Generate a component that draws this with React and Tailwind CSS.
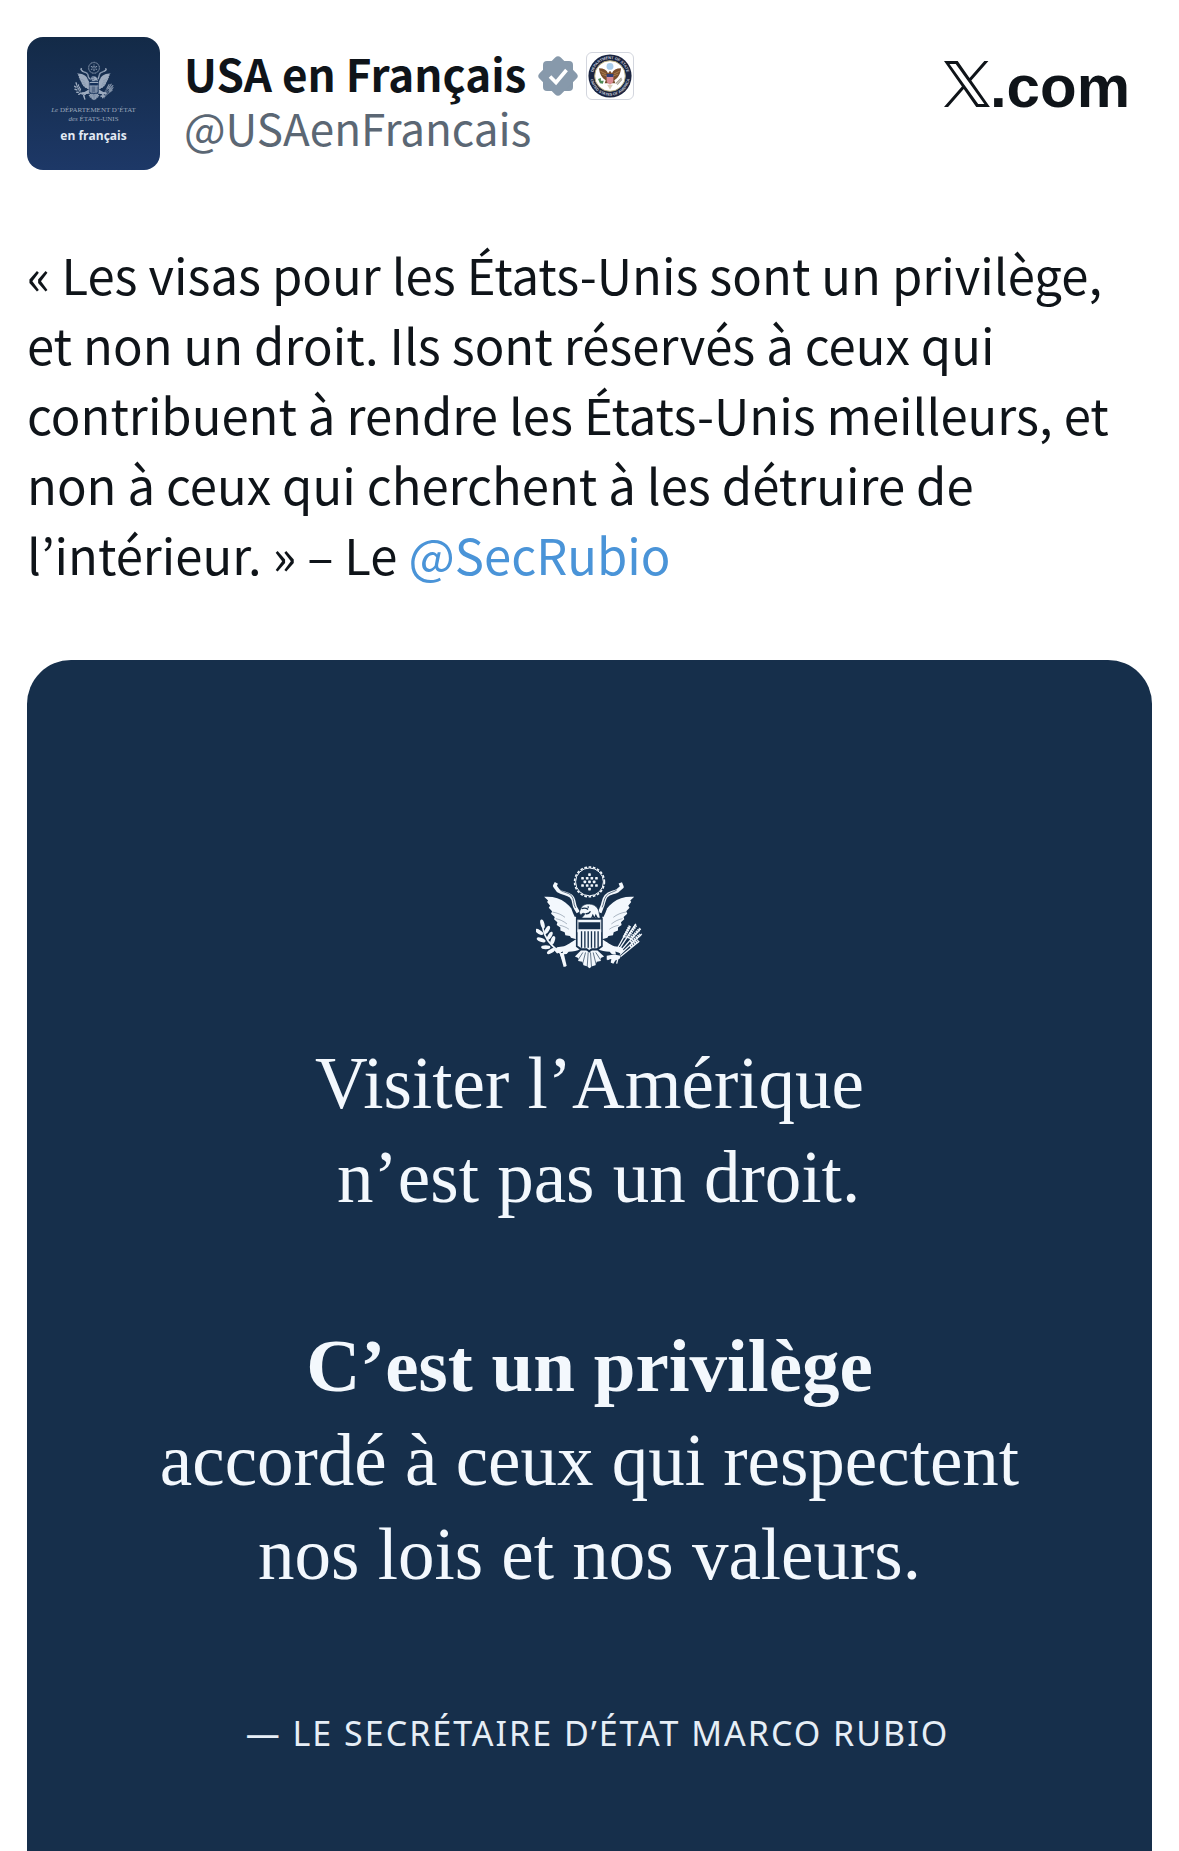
import React from "react";

const DOTS = [
  [208, 73],
  [187, 84], [201, 84], [215, 84], [229, 84],
  [194, 95], [208, 95], [222, 95],
  [187, 106], [201, 106], [215, 106], [229, 106],
  [208, 117],
];

const LEAVES = [
  [66, 222, 75], [56, 246, 30], [80, 240, 120], [62, 270, 20], [88, 258, 120],
  [76, 292, 0], [97, 272, 110], [92, 304, -30],
];

const STRIPES = [182, 192, 202, 212, 222, 232];

const Wing = () => (
  <path d="M71 140c26-2 48 4 64 17 16 12 28 29 34 49l-1 62-16-4-3-6-14-2-2-9-13-5 0-9-11-8 2-8-10-9 2-7-11-10 3-7-10-11 4-6-9-11 3-5z" />
);

const Eagle = ({ className, color, ground }) => (
  <svg viewBox="47 44 322 314" className={className} fill={color} aria-hidden="true">
    {/* glory */}
    <circle cx="208" cy="95" r="42" fill="none" stroke={color} strokeWidth="3" />
    <circle cx="208" cy="95" r="45" fill="none" stroke={color} strokeWidth="5" strokeDasharray="8 5" />
    {DOTS.map(([x, y]) => <rect key={`${x}-${y}`} x={x - 4} y={y - 4} width="8" height="8" rx="2" />)}

    {/* ribbon */}
    <g fill="none" stroke={color} strokeLinejoin="round">
      <path strokeWidth="11" d="M108 98l-5 9 11 15c14 9 26 6 38 16 12 10 7 26 14 36l8 13" />
      <path strokeWidth="11" d="M301 98l5 12-14 12c-14 7-24 5-34 16-9 10-7 24-13 34l-6 16" />
    </g>
    <path fill="none" stroke={ground} strokeWidth="2" d="M120 120c12 8 24 7 33 16 10 11 5 25 13 38M290 120c-12 7-22 7-31 17-9 12-7 23-13 35" />

    {/* wings */}
    <Wing />
    <g transform="matrix(-1 0 0 1 414 0)"><Wing /></g>
    <path
      fill="none"
      stroke={ground}
      strokeWidth="1"
      d="M96 186c14 2 28 8 38 16M106 206c12 2 24 8 34 16M118 226c10 2 20 6 28 12M318 186c-14 2-28 8-38 16M308 206c-12 2-24 8-34 16M296 226c-10 2-20 6-28 12"
    />
    <path fill="none" stroke={ground} strokeWidth="5" d="M156 176c3 9 6 16 10 24M258 176c-3 9-6 16-10 24" />

    {/* head */}
    <path stroke={ground} strokeWidth="2" d="M181 178c3-12 14-17 27-16 16 1 27 11 29 27l5 21h-62c4-8 12-12 14-19-7-3-11 0-11 5-6-4-7-12-2-18z" />
    <path fill="none" stroke={ground} strokeWidth="4" d="M184 176c7-3 14-2 20 2M196 191c6 1 12-2 15-7M214 206l4-10 5 10 4-10 5 10" />
    <circle cx="204" cy="171" r="2.5" fill={ground} />

    {/* legs */}
    <path d="M174 266c-14 4-28 19-43 23l-21 3-8 10 8 9 18-6-2 9 13-1 6-7c14-1 26-2 36-9zM240 266c14 4 28 19 43 23l21 3 8 10-8 9-18-6 2 9-13-1-6-7c-14-1-26-2-36-9z" />

    {/* tail */}
    <path d="M182 302h50l20 18-10 5 0 9-12 2-4 11-10 3-8 6-8-6-10-3-4-11-12-2 0-9-10-5z" />
    <path fill="none" stroke={ground} strokeWidth="2" d="M188 308l-14 22M196 308l-9 36M204 308l-3 44M211 308l3 44M219 308l9 36M227 308l14 22" />

    {/* shield */}
    <path fill={ground} d="M167 203h81v88l-14 10h-18l-9 8-9-8h-18l-13-10z" />
    <path d="M174 209h67v8h-67zM172 238h71v50l-13 7h-16l-7 6-7-6h-16l-12-7z" />
    <path fill="none" stroke={color} strokeWidth="3" d="M173 209v38M242 209v38" />
    {STRIPES.map((x) => <rect key={x} x={x} y="244" width="4" height="50" fill={ground} />)}

    {/* olive branch */}
    <path fill="none" stroke={color} strokeWidth="5" d="M66 216c0 26 8 50 28 70l26 24 16 40" />
    {LEAVES.map(([x, y, a]) => (
      <ellipse key={`${x}-${y}`} cx={x} cy={y} rx="14" ry="6" transform={`rotate(${a} ${x} ${y})`} />
    ))}
    <path d="M118 310l12 0 9 38-9 4z" />

    {/* arrows */}
    <path
      fill="none"
      stroke={color}
      strokeWidth="4"
      d="M290 300l40-72M294 304l54-82M298 308l64-72M300 314l66-62M302 320l56-46M284 318l-22 12M288 322l-14 16M294 326l-4 16"
    />
    <path fill="none" stroke={color} strokeWidth="9" strokeDasharray="5 2" d="M312 262l18-34M322 264l26-38M330 268l31-32M332 278l30-24M330 290l26-18" />
    <path d="M260 318l22-4 20 4-2 8-14 6-6 10-8-4 2-10-14 2z" />
  </svg>
);

const VerifiedBadge = () => (
  <svg viewBox="0 0 40 40" className="size-10 shrink-0" role="img" aria-label="Compte certifié">
    <g fill="#8799ab">
      <rect x="5" y="5" width="30" height="30" rx="4" />
      <rect x="5" y="5" width="30" height="30" rx="4" transform="rotate(45 20 20)" />
    </g>
    <path d="M12 20.500l6 6L28.500 14" fill="none" stroke="#fff" strokeWidth="3.600" />
  </svg>
);

const StateSeal = () => (
  <svg viewBox="0 0 48 48" className="size-12 shrink-0 rounded-md border border-[#d3d6de]" role="img" aria-label="Department of State">
    <circle cx="24" cy="24" r="22.500" fill="#1a2440" />
    <circle cx="24" cy="24" r="16" fill="#fff" stroke="#b5a878" />
    <defs>
      <path id="seal-top" d="M6.200 24a17.800 17.800 0 0 1 35.600 0" />
      <path id="seal-bottom" d="M3.400 24a20.600 20.600 0 0 0 41.200 0" />
    </defs>
    <g fill="#c9cedb" fontFamily="Liberation Sans" fontSize="4" fontWeight="700" textAnchor="middle">
      <text><textPath href="#seal-top" startOffset="50%">DEPARTMENT OF STATE</textPath></text>
      <text><textPath href="#seal-bottom" startOffset="50%">UNITED STATES OF AMERICA</textPath></text>
    </g>
    <circle cx="24" cy="14" r="3.600" fill="#a9cdec" />
    <path d="M12.500 16c5 0 8 2 9.500 5l2-2.500 2 2.500c1.500-3 4.500-5 9.500-5-.5 6-3 10-7 12.500l1 3h-11l1-3c-4-2.500-6.500-6.500-7-12.500z" fill="#7a4f2e" />
    <path d="M14 19l6 3M15.500 22l5 2M34 19l-6 3M32.500 22l-5 2" stroke="#b98a55" strokeWidth=".8" />
    <path d="M20.500 23h7v6c0 2-2 3-3.500 4-1.500-1-3.500-2-3.500-4z" fill="#d98b93" />
    <path d="M20.500 22h7v3h-7z" fill="#2f3f78" />
    <path d="M11.500 27l3-1 0 3 3 0-1 3-3-.5z" fill="#4c8a55" />
    <path d="M30 32l6-6M31.500 33l5-5.500" stroke="#a39c8c" strokeWidth="1.200" />
    <path d="M21 33h6l-3 5z" fill="#d8cdb6" />
  </svg>
);

const XLogo = () => (
  <svg viewBox="0 0 24 24" className="size-[46px]" fill="currentColor" aria-hidden="true">
    <path d="M14.258 10.152 23.176 0h-2.113l-7.747 8.813L7.133 0H0l9.352 13.328L0 23.973h2.113l8.176-9.309 6.531 9.309h7.133zm-2.896 3.293-.949-1.328L2.875 1.560h3.246l6.086 8.523.945 1.328 7.910 11.078h-3.246z" />
  </svg>
);

const Avatar = () => (
  <div className="flex size-[133px] shrink-0 flex-col items-center rounded-2xl bg-linear-to-b from-[#132a47] to-[#1d3867] pt-6">
    <Eagle className="size-10" color="#9dabbf" ground="#15305a" />
    <p className="mt-[5px] text-center font-['Liberation_Serif',serif] text-[7px] leading-[9px] whitespace-nowrap text-[#9aa7bb]">
      <i>Le</i> DÉPARTEMENT D’ÉTAT<br />
      <i>des</i> ÉTATS-UNIS
    </p>
    <p className="mt-1 font-['Open_Sans',sans-serif] text-[12px] leading-4 font-bold text-[#e3eaf4]">en français</p>
  </div>
);

const PostHeader = () => (
  <header className="flex items-start gap-6">
    <Avatar />
    <div className="flex-1 pt-[9px] text-[44px] leading-[54px]">
      <div className="flex items-end gap-2">
        <h1 className="mr-1 font-bold whitespace-nowrap">USA en Français</h1>
        <div className="flex items-center gap-2">
          <VerifiedBadge />
          <StateSeal />
        </div>
      </div>
      <a href="#profil" className="inline-block text-[#5b6774]">@USAenFrancais</a>
    </div>
    <a href="#x" aria-label="X.com" className="flex items-baseline pt-5 pr-[22px] font-['Liberation_Sans',sans-serif] text-[60px] leading-[60px] font-bold">
      <XLogo />
      <span>.com</span>
    </a>
  </header>
);

const QuoteCard = () => (
  <figure className="mt-[71px] flex flex-1 flex-col items-center rounded-t-[44px] bg-[#162f4b] pt-[205px] pb-10 text-center text-[#f3f8fd]">
    <Eagle className="h-[104px] w-[107px]" color="#f3f8fd" ground="#162f4b" />
    <blockquote className="mt-[68px] font-['Liberation_Serif',serif] text-[73px] leading-[94px]">
      <p>
        Visiter l’Amérique<br />
        &nbsp;n’est pas un droit.
      </p>
      <p className="mt-[94px]">
        <strong className="text-[75px]">C’est un privilège</strong><br />
        accordé à ceux qui respectent<br />
        nos lois et nos valeurs.
      </p>
    </blockquote>
    <figcaption className="mt-[108px] pl-4 font-['Noto_Sans',sans-serif] text-[34px] leading-[46px] tracking-[2px] text-[#e6eef6] uppercase">
      — Le secrétaire d’État Marco Rubio
    </figcaption>
  </figure>
);

export default function App() {
  return (
    <article className="flex min-h-screen flex-col bg-white px-[27px] pt-[37px] font-['Noto_Sans_CJK_JP',sans-serif] text-[#0f1419]">
      <PostHeader />
      <p lang="fr" className="mt-[69px] pr-4 text-[49px] leading-[70px]">
        « Les visas pour les États-Unis sont un privilège, et non un droit. Ils sont réservés à ceux qui
        contribuent à rendre les États-Unis meilleurs, et non à ceux qui cherchent à les détruire de
        l’intérieur. » – Le <a href="#secrubio" className="inline-block text-[#4a94d8]">@SecRubio</a>
      </p>
      <QuoteCard />
    </article>
  );
}
